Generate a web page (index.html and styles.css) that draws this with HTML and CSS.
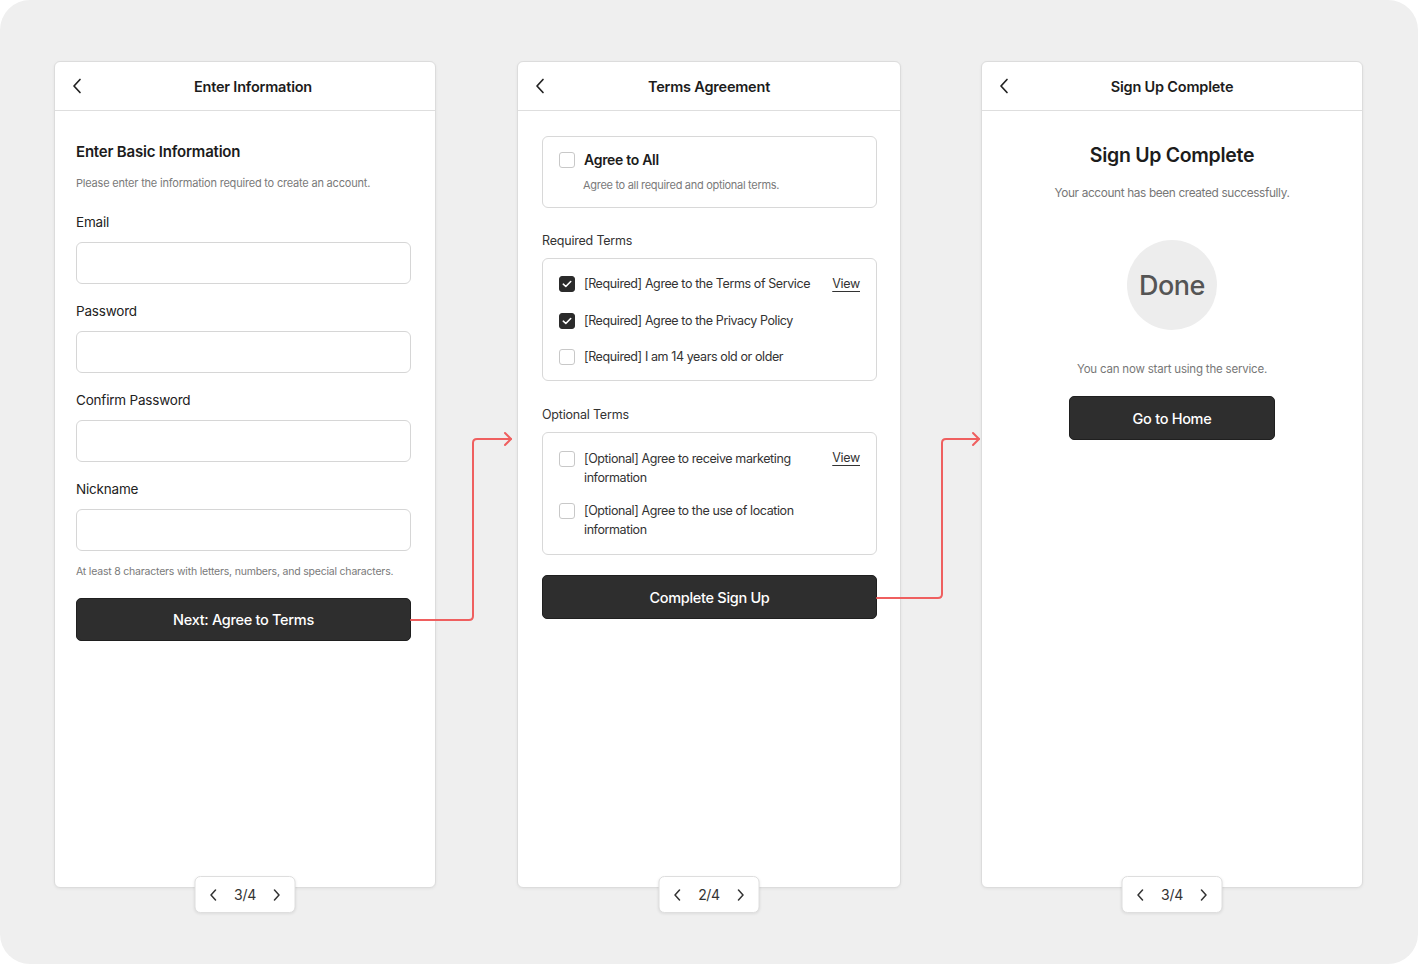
FILE: index.html
```html
<!DOCTYPE html>
<html lang="en">

<head>
    <meta charset="UTF-8">
    <meta name="viewport" content="width=device-width, initial-scale=1.0">
    <title>Sign Up Flow</title>
    <link rel="stylesheet" href="styles.css">
</head>

<body>
    <div class="board">
        <!-- step 1: basic info -->
        <div class="screen">
            <div class="topbar">
                <svg class="back" width="10" height="16" viewBox="0 0 10 16"><path d="M8 1.5 L2 8 L8 14.5" fill="none" stroke="#222" stroke-width="1.7" stroke-linecap="round" stroke-linejoin="round"/></svg>
                <div class="topbar-title shifted">Enter Information</div>
            </div>
            <div class="body form">
                <h2 class="form-title">Enter Basic Information</h2>
                <p class="form-sub">Please enter the information required to create an account.</p>
                <div class="field first">
                    <div class="field-label">Email</div>
                    <div class="input"></div>
                </div>
                <div class="field">
                    <div class="field-label">Password</div>
                    <div class="input"></div>
                </div>
                <div class="field">
                    <div class="field-label">Confirm Password</div>
                    <div class="input"></div>
                </div>
                <div class="field">
                    <div class="field-label">Nickname</div>
                    <div class="input"></div>
                </div>
                <p class="hint">At least 8 characters with letters, numbers, and special characters.</p>
                <div class="btn btn-next">Next: Agree to Terms</div>
            </div>
            <div class="pager">
                <svg width="8" height="12" viewBox="0 0 8 12"><path d="M6 1 L1.5 6 L6 11" fill="none" stroke="#333" stroke-width="1.5" stroke-linecap="round" stroke-linejoin="round"/></svg>
                <span>3/4</span>
                <svg width="8" height="12" viewBox="0 0 8 12"><path d="M2 1 L6.5 6 L2 11" fill="none" stroke="#333" stroke-width="1.5" stroke-linecap="round" stroke-linejoin="round"/></svg>
            </div>
        </div>

        <!-- step 2: terms -->
        <div class="screen wide">
            <div class="topbar">
                <svg class="back" width="10" height="16" viewBox="0 0 10 16"><path d="M8 1.5 L2 8 L8 14.5" fill="none" stroke="#222" stroke-width="1.7" stroke-linecap="round" stroke-linejoin="round"/></svg>
                <div class="topbar-title">Terms Agreement</div>
            </div>
            <div class="body terms">
                <div class="box all">
                    <div class="row">
                        <span class="check"></span>
                        <span class="all-title">Agree to All</span>
                    </div>
                    <div class="all-sub">Agree to all required and optional terms.</div>
                </div>

                <div class="group-label">Required Terms</div>
                <div class="box list">
                    <div class="row">
                        <span class="check on"><svg width="10" height="8" viewBox="0 0 10 8"><path d="M1.3 4.2 L3.8 6.5 L8.7 1.5" fill="none" stroke="#fff" stroke-width="1.6" stroke-linecap="round" stroke-linejoin="round"/></svg></span>
                        <span class="term">[Required] Agree to the Terms of Service</span>
                        <span class="view">View</span>
                    </div>
                    <div class="row">
                        <span class="check on"><svg width="10" height="8" viewBox="0 0 10 8"><path d="M1.3 4.2 L3.8 6.5 L8.7 1.5" fill="none" stroke="#fff" stroke-width="1.6" stroke-linecap="round" stroke-linejoin="round"/></svg></span>
                        <span class="term">[Required] Agree to the Privacy Policy</span>
                    </div>
                    <div class="row">
                        <span class="check"></span>
                        <span class="term">[Required] I am 14 years old or older</span>
                    </div>
                </div>

                <div class="group-label optional">Optional Terms</div>
                <div class="box list two-line">
                    <div class="row">
                        <span class="check"></span>
                        <span class="term">[Optional] Agree to receive marketing information</span>
                        <span class="view">View</span>
                    </div>
                    <div class="row">
                        <span class="check"></span>
                        <span class="term">[Optional] Agree to the use of location information</span>
                    </div>
                </div>

                <div class="btn btn-complete">Complete Sign Up</div>
            </div>
            <div class="pager">
                <svg width="8" height="12" viewBox="0 0 8 12"><path d="M6 1 L1.5 6 L6 11" fill="none" stroke="#333" stroke-width="1.5" stroke-linecap="round" stroke-linejoin="round"/></svg>
                <span>2/4</span>
                <svg width="8" height="12" viewBox="0 0 8 12"><path d="M2 1 L6.5 6 L2 11" fill="none" stroke="#333" stroke-width="1.5" stroke-linecap="round" stroke-linejoin="round"/></svg>
            </div>
        </div>

        <!-- step 3: done -->
        <div class="screen">
            <div class="topbar">
                <svg class="back" width="10" height="16" viewBox="0 0 10 16"><path d="M8 1.5 L2 8 L8 14.5" fill="none" stroke="#222" stroke-width="1.7" stroke-linecap="round" stroke-linejoin="round"/></svg>
                <div class="topbar-title">Sign Up Complete</div>
            </div>
            <div class="body done">
                <h1 class="done-title">Sign Up Complete</h1>
                <p class="done-sub">Your account has been created successfully.</p>
                <div class="done-circle">Done</div>
                <p class="done-note">You can now start using the service.</p>
                <div class="btn btn-home">Go to Home</div>
            </div>
            <div class="pager">
                <svg width="8" height="12" viewBox="0 0 8 12"><path d="M6 1 L1.5 6 L6 11" fill="none" stroke="#333" stroke-width="1.5" stroke-linecap="round" stroke-linejoin="round"/></svg>
                <span>3/4</span>
                <svg width="8" height="12" viewBox="0 0 8 12"><path d="M2 1 L6.5 6 L2 11" fill="none" stroke="#333" stroke-width="1.5" stroke-linecap="round" stroke-linejoin="round"/></svg>
            </div>
        </div>

        <!-- flow arrows between steps -->
        <svg class="flow" width="1418" height="964" viewBox="0 0 1418 964">
            <g fill="none" stroke="#ef5f5f" stroke-width="2" stroke-linecap="round" stroke-linejoin="round">
                <path d="M411 620 H469 Q473 620 473 616 V443 Q473 439 477 439 H511"/>
                <path d="M505 433 L511 439 L505 445"/>
                <path d="M877 598 H938 Q942 598 942 594 V443 Q942 439 946 439 H979"/>
                <path d="M973 433 L979 439 L973 445"/>
            </g>
        </svg>
    </div>
</body>

</html>
```

FILE: styles.css
```css
body {
    margin: 0;
    padding: 0;
    background: #fff;
    font-family: Inter, "Noto Sans", sans-serif;
    color: #1c1c1c;
}

.board {
    position: relative;
    width: 1418px;
    height: 964px;
    box-sizing: border-box;
    padding: 61px 0 0 54px;
    background: #efefef;
    border-radius: 30px;
    display: flex;
    gap: 81px;
    align-items: flex-start;
}

.screen {
    position: relative;
    width: 382px;
    height: 827px;
    box-sizing: border-box;
    background: #fff;
    border: 1px solid #dcdcdc;
    border-radius: 6px;
    box-shadow: 0 1px 3px rgba(0, 0, 0, 0.06);
}

.screen.wide {
    width: 384px;
    margin-right: -1px;
}

.topbar {
    position: relative;
    height: 48px;
    border-bottom: 1px solid #dedede;
    display: flex;
    align-items: center;
    justify-content: center;
}

.back {
    position: absolute;
    left: 17px;
    top: 16px;
}

.topbar-title {
    font-size: 14.5px;
    font-weight: 600;
    letter-spacing: -0.2px;
}

.topbar-title.shifted {
    padding-left: 16px;
}

/* step 1 */
.form {
    padding: 31px 24px 0 21px;
}

.form-title {
    margin: 0;
    font-size: 15px;
    line-height: 20px;
    font-weight: 600;
    letter-spacing: -0.2px;
}

.form-sub {
    margin: 13px 0 0;
    font-size: 11px;
    line-height: 16px;
    color: #7a7a7a;
    letter-spacing: -0.2px;
}

.field {
    margin-top: 18px;
}

.field.first {
    margin-top: 22px;
}

.field-label {
    font-size: 13.5px;
    line-height: 18px;
    letter-spacing: -0.2px;
    color: #222;
}

.input {
    margin-top: 11px;
    height: 40px;
    border: 1px solid #d6d6d6;
    border-radius: 6px;
}

.hint {
    margin: 14px 0 0;
    font-size: 10.5px;
    line-height: 14px;
    color: #7a7a7a;
    letter-spacing: -0.2px;
}

.btn {
    height: 43px;
    background: #2e2e2e;
    border: 1px solid #1f1f1f;
    box-sizing: border-box;
    border-radius: 5px;
    color: #fff;
    font-size: 14.5px;
    font-weight: 500;
    letter-spacing: -0.3px;
    display: flex;
    align-items: center;
    justify-content: center;
}

.btn-next {
    margin-top: 19px;
}

/* step 2 */
.terms {
    padding: 25px 23px 0 24px;
}

.box {
    border: 1px solid #d8d8d8;
    border-radius: 6px;
}

.all {
    padding: 14px 16px 15px;
}

.row {
    display: flex;
    align-items: flex-start;
    gap: 9px;
}

.check {
    flex: none;
    width: 14px;
    height: 14px;
    margin-top: 1px;
    border: 1px solid #c8c8c8;
    border-radius: 3px;
    background: #fff;
    display: flex;
    align-items: center;
    justify-content: center;
}

.check.on {
    background: #2b2b2b;
    border-color: #2b2b2b;
}

.all-title {
    font-size: 14px;
    line-height: 18px;
    font-weight: 600;
    letter-spacing: -0.3px;
}

.all-sub {
    margin: 9px 0 0 24px;
    font-size: 11px;
    line-height: 14px;
    color: #7a7a7a;
    letter-spacing: -0.3px;
}

.group-label {
    margin: 25px 0 9px;
    font-size: 12.5px;
    line-height: 16px;
    color: #333;
    letter-spacing: -0.2px;
}

.group-label.optional {
    margin-top: 26px;
}

.list {
    padding: 16px 16px 14px;
    display: flex;
    flex-direction: column;
    gap: 18.5px;
}

.list.two-line {
    padding-bottom: 15px;
    gap: 14px;
}

.term {
    flex: 1;
    font-size: 12.5px;
    line-height: 18px;
    color: #333;
    letter-spacing: -0.4px;
}

.two-line .term {
    flex: 0 1 auto;
    width: 236px;
    line-height: 19px;
    margin-right: auto;
}

.two-line .check {
    margin-top: 2px;
}

.view {
    font-size: 12.5px;
    line-height: 18px;
    color: #333;
    text-decoration: underline;
    text-underline-offset: 3px;
    letter-spacing: -0.3px;
}

.btn-complete {
    margin-top: 20px;
    height: 44px;
}

/* step 3 */
.done {
    padding-top: 31px;
    display: flex;
    flex-direction: column;
    align-items: center;
}

.done-title {
    margin: 0;
    font-size: 19.5px;
    line-height: 26px;
    font-weight: 600;
    letter-spacing: -0.3px;
}

.done-sub {
    margin: 17px 0 0;
    font-size: 11.8px;
    line-height: 16px;
    color: #777;
    letter-spacing: -0.35px;
}

.done-circle {
    margin-top: 39px;
    width: 90px;
    height: 90px;
    border-radius: 50%;
    background: #ededed;
    color: #555;
    font-size: 27px;
    font-weight: 500;
    letter-spacing: -0.5px;
    display: flex;
    align-items: center;
    justify-content: center;
}

.done-note {
    margin: 31px 0 0;
    font-size: 11.5px;
    line-height: 16px;
    color: #777;
    letter-spacing: -0.2px;
}

.btn-home {
    margin-top: 19px;
    width: 206px;
    height: 44px;
}

/* page badge sitting on the bottom edge */
.pager {
    position: absolute;
    left: 50%;
    bottom: -26px;
    transform: translateX(-50%);
    width: 101px;
    height: 37px;
    box-sizing: border-box;
    background: #fff;
    border: 1px solid #dedede;
    border-radius: 6px;
    box-shadow: 0 1px 3px rgba(0, 0, 0, 0.08);
    display: flex;
    align-items: center;
    justify-content: center;
    gap: 17px;
    font-size: 14px;
    color: #333;
    letter-spacing: -0.3px;
}

.flow {
    position: absolute;
    left: 0;
    top: 0;
    pointer-events: none;
}
```
